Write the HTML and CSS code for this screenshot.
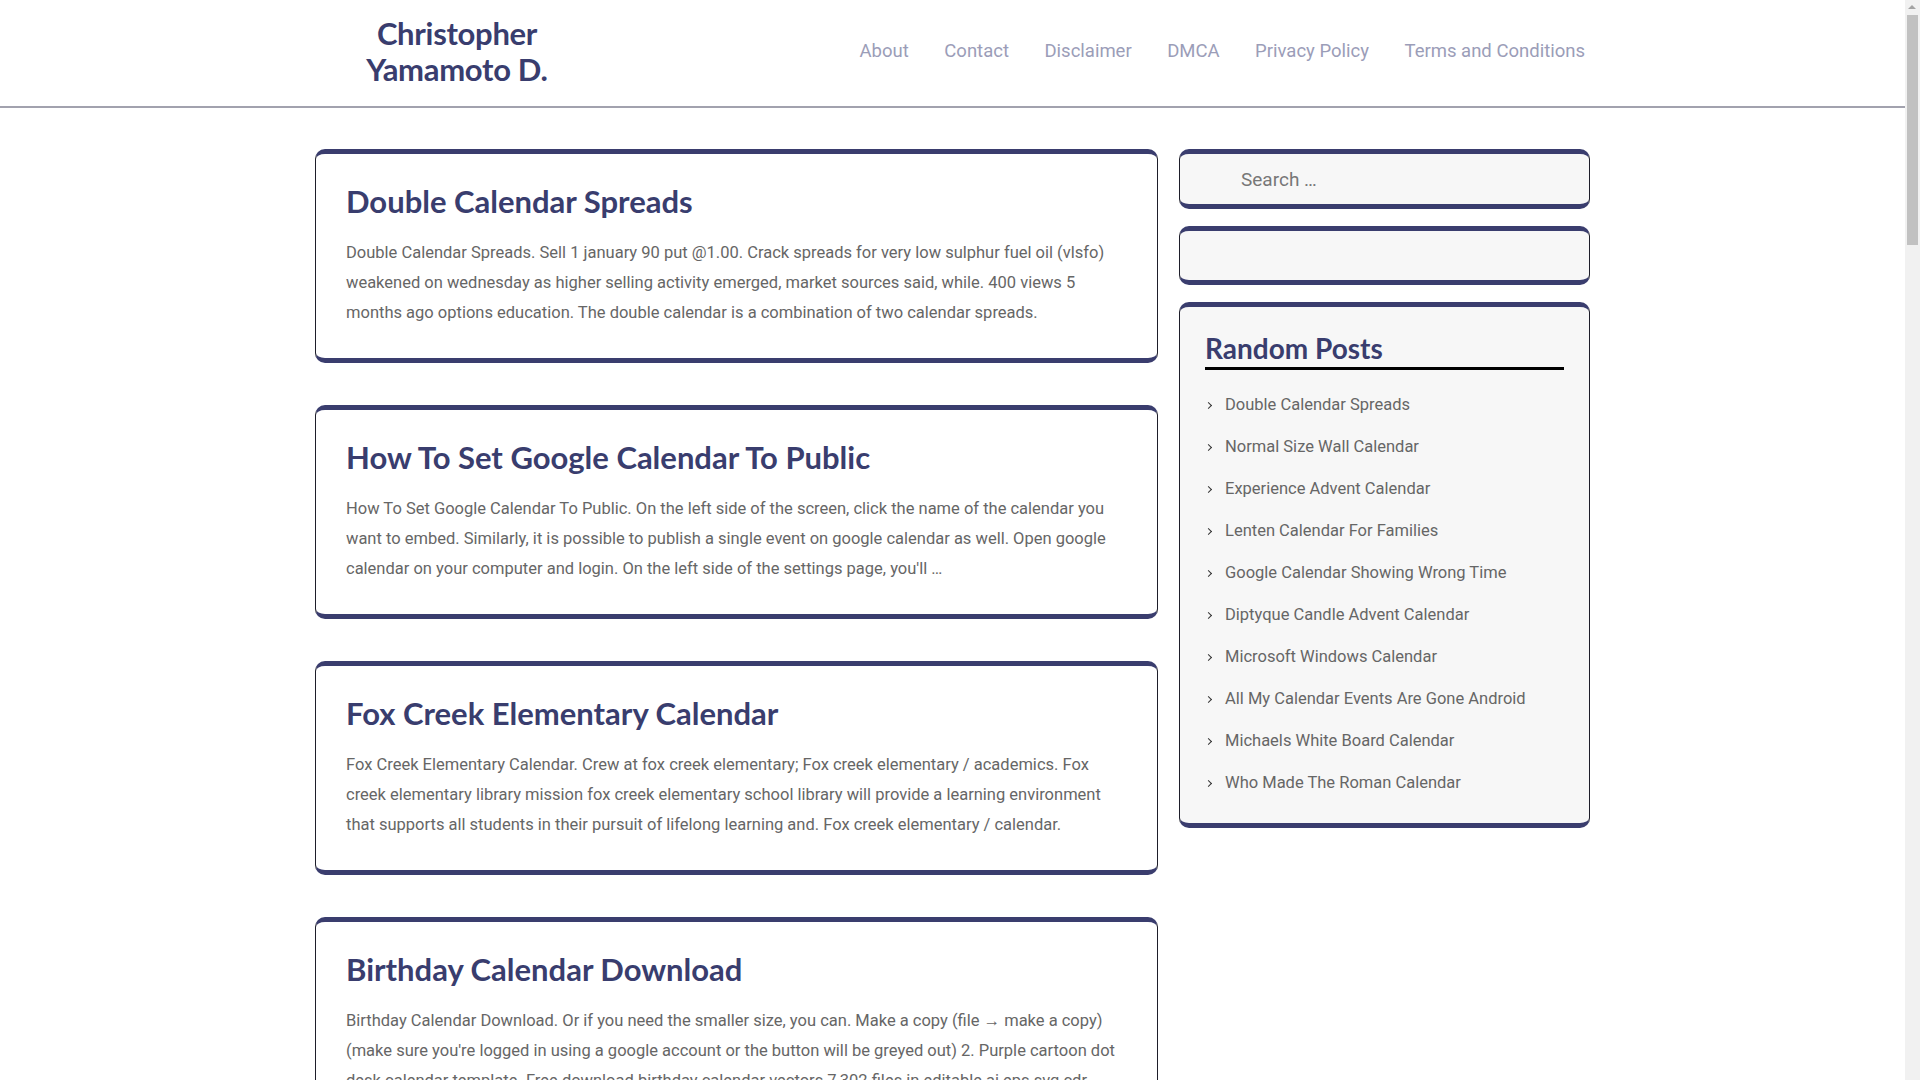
FILE: index.html
```html
<!DOCTYPE html>
<html lang="en">
<head>
<meta charset="utf-8">
<title>Christopher Yamamoto D.</title>
<link rel="stylesheet" href="styles.css">
</head>
<body>
<div class="fake-scrollbar" aria-hidden="true">
  <div class="sb-arrow"></div>
  <div class="sb-thumb"></div>
</div>
<header class="site-header">
  <div class="header-inner">
    <div class="logo"><a href="#">Christopher<br>Yamamoto D.</a></div>
    <nav class="main-nav">
      <a href="#">About</a>
      <a href="#">Contact</a>
      <a href="#">Disclaimer</a>
      <a href="#">DMCA</a>
      <a href="#">Privacy Policy</a>
      <a href="#">Terms and Conditions</a>
    </nav>
  </div>
</header>
<div class="container">
  <main class="posts">
    <article class="card post">
      <h2 class="post-title">Double Calendar Spreads</h2>
      <p class="excerpt">Double Calendar Spreads. Sell 1 january 90 put @1.00. Crack spreads for very low sulphur fuel oil (vlsfo) weakened on wednesday as higher selling activity emerged, market sources said, while. 400 views 5 months ago options education. The double calendar is a combination of two calendar spreads.</p>
    </article>
    <article class="card post">
      <h2 class="post-title">How To Set Google Calendar To Public</h2>
      <p class="excerpt">How To Set Google Calendar To Public. On the left side of the screen, click the name of the calendar you want to embed. Similarly, it is possible to publish a single event on google calendar as well. Open google calendar on your computer and login. On the left side of the settings page, you'll …</p>
    </article>
    <article class="card post">
      <h2 class="post-title">Fox Creek Elementary Calendar</h2>
      <p class="excerpt">Fox Creek Elementary Calendar. Crew at fox creek elementary; Fox creek elementary / academics. Fox creek elementary library mission fox creek elementary school library will provide a learning environment that supports all students in their pursuit of lifelong learning and. Fox creek elementary / calendar.</p>
    </article>
    <article class="card post">
      <h2 class="post-title">Birthday Calendar Download</h2>
      <p class="excerpt">Birthday Calendar Download. Or if you need the smaller size, you can. Make a copy (file → make a copy) (make sure you're logged in using a google account or the button will be greyed out) 2. Purple cartoon dot desk calendar template. Free download birthday calendar vectors 7,302 files in editable ai eps svg cdr formats. Print it out and hang it on your wall.</p>
    </article>
  </main>
  <aside class="sidebar">
    <div class="card widget search-widget">
      <input class="search-field" type="search" placeholder="Search …">
    </div>
    <div class="card widget empty-widget"></div>
    <div class="card widget list-widget">
      <h3 class="widget-title">Random Posts</h3>
      <ul class="post-list">
        <li><a href="#">Double Calendar Spreads</a></li>
        <li><a href="#">Normal Size Wall Calendar</a></li>
        <li><a href="#">Experience Advent Calendar</a></li>
        <li><a href="#">Lenten Calendar For Families</a></li>
        <li><a href="#">Google Calendar Showing Wrong Time</a></li>
        <li><a href="#">Diptyque Candle Advent Calendar</a></li>
        <li><a href="#">Microsoft Windows Calendar</a></li>
        <li><a href="#">All My Calendar Events Are Gone Android</a></li>
        <li><a href="#">Michaels White Board Calendar</a></li>
        <li><a href="#">Who Made The Roman Calendar</a></li>
      </ul>
    </div>
  </aside>
</div>
</body>
</html>
```
FILE: styles.css
```css
* { box-sizing: border-box; }
html, body { margin: 0; padding: 0; }
body {
  width: 1905px;
  font-family: Roboto, "Liberation Sans", sans-serif;
  color: #666;
  background: #fff;
}
a { text-decoration: none; color: inherit; }

.fake-scrollbar {
  position: fixed;
  top: 0;
  right: 0;
  width: 15px;
  height: 100vh;
  background: #f1f1f1;
  z-index: 10;
}
.sb-arrow {
  position: absolute;
  top: 5px;
  left: 3px;
  width: 0;
  height: 0;
  border-left: 4px solid transparent;
  border-right: 4px solid transparent;
  border-bottom: 4px solid #a3a3a3;
}
.sb-thumb {
  position: absolute;
  top: 15px;
  left: 2px;
  width: 11px;
  height: 230px;
  background: #c1c1c1;
}

.site-header {
  border-bottom: 2px solid #a2a2ae;
}
.header-inner {
  width: 1275px;
  margin: 0 auto;
  height: 106px;
  padding-bottom: 4px;
  display: flex;
  align-items: center;
  justify-content: space-between;
}
.logo {
  width: 284px;
  text-align: center;
  font-family: Lato, "Liberation Sans", sans-serif;
  font-weight: 700;
  font-size: 31px;
  line-height: 36px;
  color: #393d6e;
  letter-spacing: -0.3px;
}
.main-nav {
  display: flex;
  gap: 35.5px;
  padding-right: 5px;
}
.main-nav a {
  font-size: 18.5px;
  color: #9b9db8;
}

.container {
  width: 1275px;
  margin: 41px auto 0;
  display: flex;
  gap: 21px;
  align-items: flex-start;
}
.posts {
  width: 843px;
  display: flex;
  flex-direction: column;
  gap: 42px;
}
.card {
  border: 1px solid #1e1e2a;
  border-top: 5px solid #3a3d6e;
  border-bottom: 5px solid #3a3d6e;
  border-radius: 10px;
}
.post {
  padding: 28px 30px 30px;
  background: #fff;
}
.post-title {
  margin: 0 0 18px;
  font-family: Lato, "Liberation Sans", sans-serif;
  font-weight: 700;
  font-size: 31px;
  line-height: 38px;
  color: #393d6e;
}
.excerpt {
  margin: 0;
  font-size: 16.5px;
  line-height: 30px;
  color: #666;
}

.sidebar {
  width: 411px;
  display: flex;
  flex-direction: column;
  gap: 17px;
}
.widget { background: #f7f7f7; }
.search-widget { height: 60px; display: flex; align-items: center; }
.search-field {
  width: 100%;
  border: 0;
  background: transparent;
  padding: 0 0 0 61px;
  font-family: Roboto, "Liberation Sans", sans-serif;
  font-size: 19px;
  color: #666;
  outline: none;
}
.search-field::placeholder { color: #777; }
.empty-widget { height: 59px; }
.list-widget { padding: 23px 25px 19px 25px; }
.widget-title {
  margin: 0;
  font-family: Lato, "Liberation Sans", sans-serif;
  font-weight: 700;
  font-size: 28px;
  line-height: 36px;
  color: #393d6e;
  padding-bottom: 1px;
  border-bottom: 3px solid #000;
}
.post-list {
  list-style: none;
  margin: 14px 0 0;
  padding: 0;
}
.post-list li {
  position: relative;
  padding-left: 20px;
  font-size: 16.5px;
  line-height: 42px;
  color: #666;
}
.post-list li::before {
  content: "";
  position: absolute;
  left: 1px;
  top: 19px;
  width: 4px;
  height: 4px;
  border-top: 1.6px solid #333;
  border-right: 1.6px solid #333;
  transform: rotate(45deg);
}
```
